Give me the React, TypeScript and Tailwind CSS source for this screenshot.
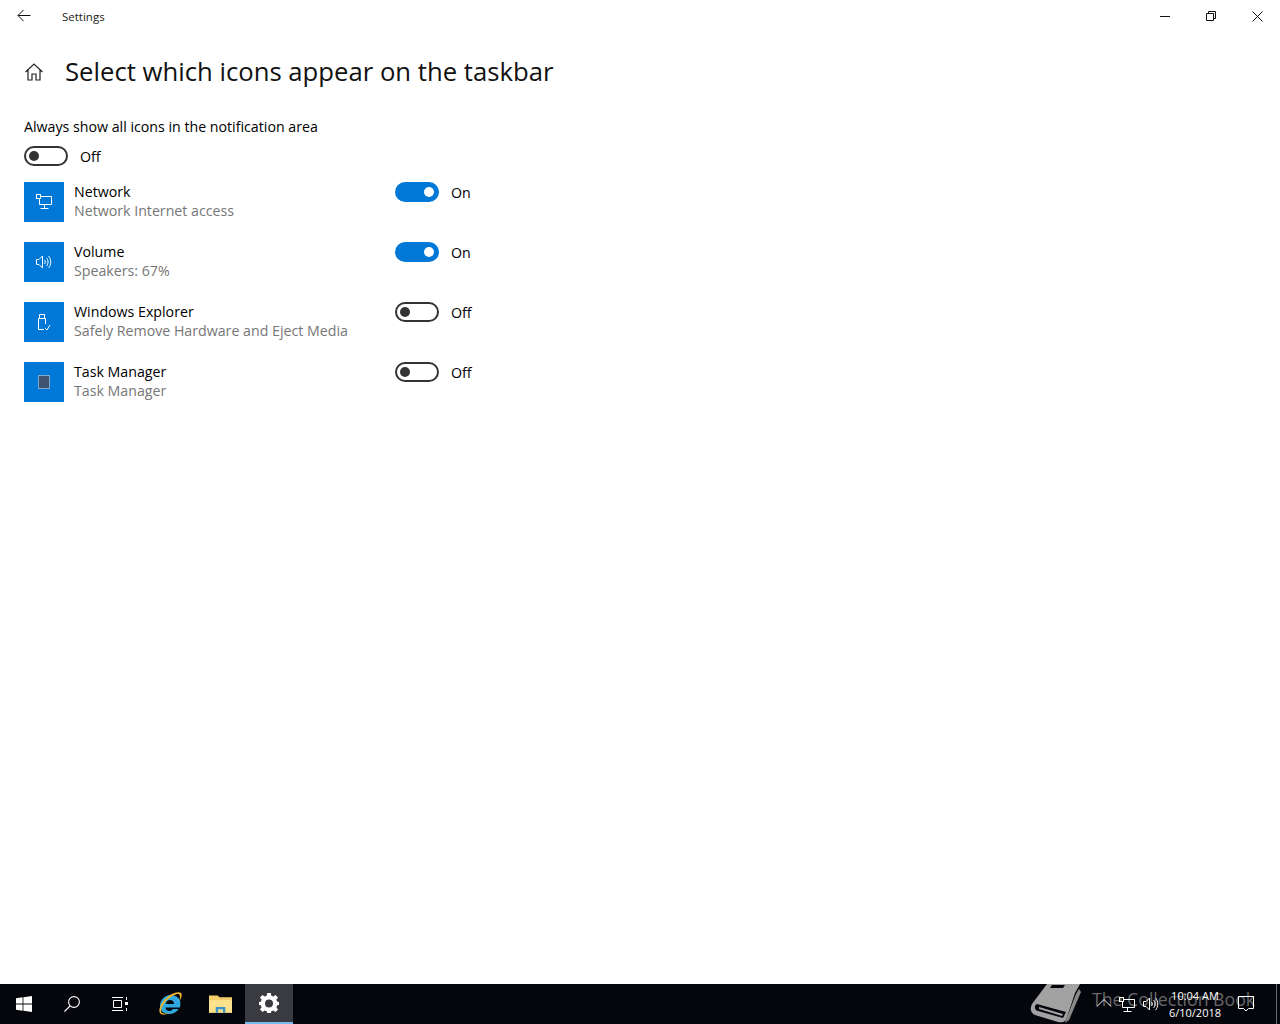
import React from "react";

function Toggle({ on }: { on: boolean }) {
  return on ? (
    <div className="w-[44px] h-[20px] rounded-full bg-[#0078d7] flex items-center justify-end pr-[5px] shrink-0">
      <div className="w-[10px] h-[10px] rounded-full bg-white" />
    </div>
  ) : (
    <div className="w-[44px] h-[20px] rounded-full border-2 border-[#333333] flex items-center pl-[3px] shrink-0">
      <div className="w-[10px] h-[10px] rounded-full bg-[#333333]" />
    </div>
  );
}

const NetIcon = ({ size = 16 }: { size?: number }) => (
  <svg width={size} height={size} viewBox="0 0 16 16" fill="none" stroke="white" strokeWidth="1">
    <path d="M4.5 2.5H15.5V10.5H3.5V4.5" />
    <rect x="0.5" y="0.5" width="4" height="4" />
    <path d="M8.5 10.5V14.5M4.500 14.500H12.500" />
  </svg>
);
const VolIcon = ({ size = 16 }: { size?: number }) => (
  <svg width={size} height={size} viewBox="0 0 16 16" fill="none" stroke="white" strokeWidth="1">
    <path d="M0.5 5.5H3L6.5 2V14L3 10.5H0.5Z" />
    <path d="M8.5 6C9.5 7 9.5 9 8.5 10" />
    <path d="M10.5 4C12.5 6 12.5 10 10.5 12" />
    <path d="M12.5 2C15.5 5 15.5 11 12.5 14" />
  </svg>
);

function Row({ icon, title, sub, on }: { icon: React.ReactNode; title: string; sub: string; on: boolean }) {
  return (
    <div className="flex h-[60px]">
      <div className="w-[40px] h-[40px] bg-[#0078d7] flex items-center justify-center shrink-0">{icon}</div>
      <div className="w-[331px] pl-[10px] shrink-0">
        <div className="text-[14.2px] leading-[20px] text-black">{title}</div>
        <div className="text-[14.2px] leading-[19px] -mt-px text-[#767676]">{sub}</div>
      </div>
      <div className="flex items-start gap-[12px]">
        <Toggle on={on} />
        <span className="text-[14.2px] leading-[20px] mt-px text-black">{on ? "On" : "Off"}</span>
      </div>
    </div>
  );
}

export default function App() {
  return (
    <div className="w-[1280px] h-[1024px] bg-white flex flex-col overflow-hidden" style={{ fontFamily: '"Open Sans", "Noto Sans", sans-serif' }}>
      <div className="h-[32px] flex items-center shrink-0">
        <svg className="ml-[17px]" width="14" height="14" viewBox="0 0 14 14" fill="none" stroke="#111" strokeWidth="1">
          <path d="M13.500 6.500H1M6.500 1L1 6.500L6.500 12" />
        </svg>
        <span className="ml-[31px] mt-px text-[11.5px] text-[#222]">Settings</span>
        <div className="ml-auto flex items-center">
          <div className="w-[46px] h-[32px] flex items-center justify-center">
            <svg width="10" height="10" viewBox="0 0 10 10" stroke="#111" fill="none"><path d="M0 5.500H10" /></svg>
          </div>
          <div className="w-[46px] h-[32px] flex items-center justify-center">
            <svg width="10" height="10" viewBox="0 0 10 10" stroke="#111" fill="none"><path d="M0.500 2.500H7.500V9.500H0.500Z M2.500 2.500V0.500H9.500V7.500H7.500" /></svg>
          </div>
          <div className="w-[46px] h-[32px] flex items-center justify-center">
            <svg width="11" height="11" viewBox="0 0 11 11" stroke="#111" fill="none"><path d="M0.500 0.500L10.500 10.500M10.500 0.500L0.500 10.500" /></svg>
          </div>
        </div>
      </div>

      <div className="flex-1 pl-[24px]">
        <div className="flex items-center h-[40px] mt-[20px]">
          <svg width="20" height="20" viewBox="0 0 20 20" fill="none" stroke="#222" strokeWidth="1.2">
            <path d="M1.500 10L10 2L18.500 10M4 8V18H8V12H12V18H16V8" />
          </svg>
          <span className="ml-[21px] text-[25.7px] leading-[40px] text-[#111]">Select which icons appear on the taskbar</span>
        </div>
        <div className="mt-[25px] text-[14.2px] leading-[20px] text-black">Always show all icons in the notification area</div>
        <div className="mt-[9px] flex items-center gap-[12px] h-[20px]">
          <Toggle on={false} />
          <span className="text-[14.2px] leading-[20px] mt-px text-black">Off</span>
        </div>
        <div className="mt-[16px]">
          <Row on title="Network" sub="Network Internet access" icon={<NetIcon />} />
          <Row on title="Volume" sub="Speakers: 67%" icon={<VolIcon />} />
          <Row on={false} title="Windows Explorer" sub="Safely Remove Hardware and Eject Media" icon={
            <svg width="16" height="18" viewBox="0 0 16 18" fill="none" stroke="white" strokeWidth="1">
              <path d="M3.500 1.500H8.500V5.500H3.500Z" />
              <path d="M2.500 5.500H9.500V11M2.500 5.500V16.500H8" />
              <path d="M9 15L11 17L14 12" />
            </svg>
          } />
          <Row on={false} title="Task Manager" sub="Task Manager" icon={
            <div className="w-[12px] h-[14px] -mt-px bg-[#3f5470] border border-[#7fa8cf]" />
          } />
        </div>
      </div>

      <div className="h-[40px] bg-[#05060c] flex items-center shrink-0 relative">
        <div className="w-[48px] h-[40px] flex items-center justify-center">
          <svg width="16" height="16" viewBox="0 0 16 16" fill="white"><path d="M0 2.200L6.600 1.300V7.600H0ZM7.400 1.200L16 0V7.600H7.400ZM0 8.400H6.600V14.700L0 13.800ZM7.400 8.400H16V16L7.400 14.800Z" /></svg>
        </div>
        <div className="w-[48px] h-[40px] flex items-center justify-center">
          <svg width="16" height="16" viewBox="0 0 16 16" fill="none" stroke="white" strokeWidth="1.1"><circle cx="10" cy="6" r="5.400" /><path d="M6 10L0.500 15.500" /></svg>
        </div>
        <div className="w-[48px] h-[40px] flex items-center justify-center">
          <svg width="16" height="14" viewBox="0 0 16 14" fill="none" stroke="white" strokeWidth="1"><path d="M0 0.500H11M0 13.500H11M1.500 3.500H9.500V10.500H1.500Z M14.500 0V3M14.500 11V14" /><rect x="13" y="5" width="3" height="3" fill="white" stroke="none" /></svg>
        </div>
        <div className="w-[52px] h-[40px] flex items-center justify-center">
          <svg width="26" height="26" viewBox="0 0 26 26">
            <path d="M23 9.500C21 5.500 17.500 4 13.500 4C7.500 4 3 9 3 15C3 20 7 23 12 23C16 23 19.500 21.500 21.500 18H16C15 19.500 13.500 20 12.200 20C10 20 8.500 18.500 8.500 16.500H23C23.500 14 23.500 12 23 9.500ZM8.700 13C9.200 10.500 11 9 13 9C15.200 9 17 10.500 17.200 13Z" fill="#2fa8e0" />
            <path d="M3 22C1 19 4 11 11 5.500C16.500 1.500 22 0.500 24 2C25.500 3.500 24.500 7 22.500 10C23 6.500 23.500 4 22 3.200C20 2.300 15 4.500 10 9C6 13 3 18.500 4.500 21.500C6.500 23.500 10.500 22.500 13 21.200C9 24.200 4.500 24.500 3 22Z" fill="#f0b52b" />
          </svg>
        </div>
        <div className="w-[49px] h-[40px] flex items-center justify-center">
          <svg width="23" height="20" viewBox="0 0 24 20">
            <path d="M0 1H9L11 3H24V19H0Z" fill="#f5cf6b" />
            <path d="M0 6H24V19H0Z" fill="#fde28e" />
            <path d="M7 19V13H17V19H14.500V15.500H9.500V19Z" fill="#3a94c8" />
          </svg>
        </div>
        <div className="w-[48px] h-[40px] bg-[#3a3b40] border-b-[2px] border-[#76b9ed] flex items-center justify-center">
          <svg width="20" height="20" viewBox="0 0 20 20" fill="white">
            <path fillRule="evenodd" d="M8.200 0H11.800L12.300 2.700L14.300 3.500L16.500 2L19 4.600L17.400 6.800L18.200 8.700L20 9V12L18.200 12.300L17.400 14.200L19 16.400L16.500 19L14.300 17.500L12.300 18.300L11.800 20H8.200L7.700 18.300L5.700 17.500L3.500 19L1 16.400L2.600 14.200L1.800 12.300L0 12V9L1.800 8.700L2.600 6.800L1 4.600L3.500 2L5.700 3.500L7.700 2.700ZM10 6.500A4 4 0 1 0 10 14.500A4 4 0 1 0 10 6.500Z" />
          </svg>
        </div>

        <div className="ml-auto flex items-center h-[40px] relative w-[250px]">
          <svg className="absolute left-0 top-0" width="54" height="40" viewBox="0 0 54 40">
            <path d="M17 0H50L45 9L37 33C36 38 32 39 28 38L5 31C0 29 0 24 2 20Z" fill="#a2a2a2" />
            <path d="M22 1H35L33 4H20Z" fill="#05060c" />
            <path d="M49 5L51 8L39 36L35 39L37 33L46 10Z" fill="#8a8a8a" />
            <path d="M7 20L36 28L33 34L8 27C4 26 4 21 7 20Z" fill="#05060c" />
            <path d="M9 23L33 30L32 32L9 25Z" fill="#a2a2a2" />
          </svg>
          <span className="absolute left-[62px] top-[3px] text-[17.7px] leading-[24px] text-[#66666b] whitespace-nowrap">The Collection Book</span>
          <svg className="absolute left-[66px] top-[14px]" width="16" height="10" viewBox="0 0 16 10" fill="none" stroke="white"><path d="M1 8.500L8 1.500L15 8.500" /></svg>
          <div className="absolute left-[89px] top-[13px]"><NetIcon /></div>
          <div className="absolute left-[113px] top-[12px]"><VolIcon /></div>
          <div className="absolute left-[130px] top-[3px] w-[70px] text-center text-[11px] leading-[17px] text-white whitespace-nowrap">
            <div>10:04 AM</div>
            <div>6/10/2018</div>
          </div>
          <svg className="absolute left-[208px] top-[12px]" width="16" height="17" viewBox="0 0 16 17" fill="none" stroke="white"><path d="M0.500 0.500H15.500V12.500H10.500L8 15L5.500 12.500H0.500Z" /></svg>
          <div className="absolute left-[246px] top-0 h-[40px] w-px bg-[#6a6a6a]" />
        </div>
      </div>
    </div>
  );
}
